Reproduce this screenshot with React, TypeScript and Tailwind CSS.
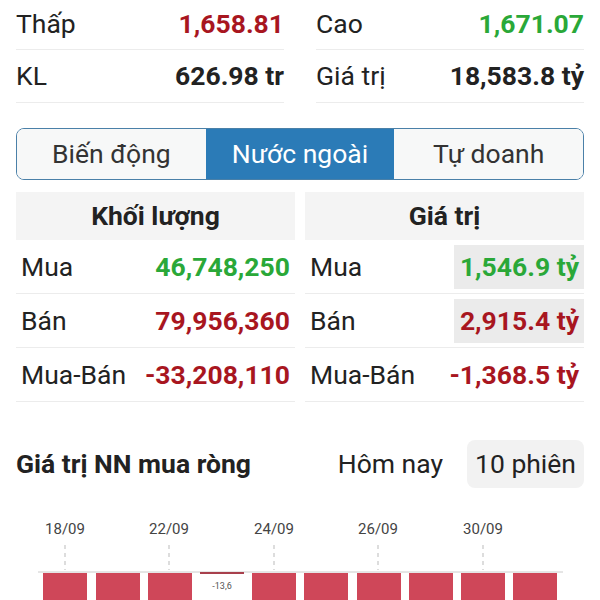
import React from 'react';

const RED = 'text-[#a8161f]';
const GREEN = 'text-[#2aa838]';

const StatRow = ({ label, value, color, first }: { label: string; value: string; color: string; first?: boolean }) => (
  <div className={`flex items-center justify-between border-b border-[#ececec] ${first ? 'h-[50px]' : 'h-[53px]'}`}>
    <span className="text-[#222]">{label}</span>
    <span className={`font-bold ${color}`}>{value}</span>
  </div>
);

const TableRow = ({ label, value, color, shaded }: { label: string; value: string; color: string; shaded?: boolean }) => (
  <div className="flex h-[54px] items-stretch justify-between border-b border-[#ececec] pt-[5px] pb-[4px]">
    <span className="flex items-center pl-[5px] text-[#222]">{label}</span>
    <span className={`flex items-center justify-end pr-[5px] font-bold ${color} ${shaded ? 'w-[130px] bg-[#ebebeb]' : ''}`}>
      {value}
    </span>
  </div>
);

const bars = [43, 96, 148, 200, 252, 304, 357, 409, 461, 513];
const ticks = [
  { x: 65, label: '18/09' },
  { x: 169, label: '22/09' },
  { x: 274, label: '24/09' },
  { x: 378, label: '26/09' },
  { x: 483, label: '30/09' },
];

const Chart = () => (
  <svg width="600" height="112" viewBox="0 0 600 112" className="block">
    {ticks.map((t) => (
      <g key={t.label}>
        <text x={t.x} y={46} textAnchor="middle" fontSize="15" fill="#444" fontFamily="Roboto, sans-serif">
          {t.label}
        </text>
        <line x1={t.x} y1={57} x2={t.x} y2={82} stroke="#bbb" strokeWidth="1" strokeDasharray="4 4" />
      </g>
    ))}
    <line x1={38} y1={84} x2={563} y2={84} stroke="#ccc" strokeWidth="1" />
    {bars.map((x, i) =>
      i === 3 ? (
        <g key={x}>
          <rect x={x} y={84} width={44} height={2} fill="#a8404c" />
          <text x={x + 22} y={101} textAnchor="middle" fontSize="9" fill="#555" fontFamily="Roboto, sans-serif">
            -13,6
          </text>
        </g>
      ) : (
        <rect key={x} x={x} y={85} width={44} height={40} fill="#cf4759" />
      )
    )}
  </svg>
);

export default function App() {
  return (
    <div className="h-[600px] w-[600px] overflow-hidden bg-white font-['Roboto',sans-serif] text-[26.5px] leading-none">
      <div className="flex gap-8 px-4">
        <div className="flex-1">
          <StatRow first label="Thấp" value="1,658.81" color={RED} />
          <StatRow label="KL" value="626.98 tr" color="text-[#222]" />
        </div>
        <div className="flex-1">
          <StatRow first label="Cao" value="1,671.07" color={GREEN} />
          <StatRow label="Giá trị" value="18,583.8 tỷ" color="text-[#222]" />
        </div>
      </div>

      <div className="mx-4 mt-[25px] flex h-[52px] overflow-hidden rounded-[8px] border-[1.5px] border-[#4a80a8]">
        <div className="flex flex-1 items-center justify-center bg-[#f7f8f8] text-[#333]">Biến động</div>
        <div className="flex flex-1 items-center justify-center bg-[#2b7bb7] text-white">Nước ngoài</div>
        <div className="flex flex-1 items-center justify-center bg-[#f7f8f8] text-[#333]">Tự doanh</div>
      </div>

      <div className="mt-[12px] flex gap-[10px] px-4">
        <div className="flex-1">
          <div className="flex h-[48px] items-center justify-center bg-[#f4f4f4] font-bold text-[#222]">Khối lượng</div>
          <TableRow label="Mua" value="46,748,250" color={GREEN} />
          <TableRow label="Bán" value="79,956,360" color={RED} />
          <TableRow label="Mua-Bán" value="-33,208,110" color={RED} />
        </div>
        <div className="flex-1">
          <div className="flex h-[48px] items-center justify-center bg-[#f4f4f4] font-bold text-[#222]">Giá trị</div>
          <TableRow shaded label="Mua" value="1,546.9 tỷ" color={GREEN} />
          <TableRow shaded label="Bán" value="2,915.4 tỷ" color={RED} />
          <TableRow label="Mua-Bán" value="-1,368.5 tỷ" color={RED} />
        </div>
      </div>

      <div className="mt-[38px] flex items-center px-4">
        <span className="flex-1 font-bold text-[#222]">Giá trị NN mua ròng</span>
        <span className="mr-[24px] text-[#222]">Hôm nay</span>
        <span className="flex h-[48px] w-[117px] items-center justify-center rounded-[8px] bg-[#f2f2f2] text-[#222]">10 phiên</span>
      </div>

      <Chart />
    </div>
  );
}
